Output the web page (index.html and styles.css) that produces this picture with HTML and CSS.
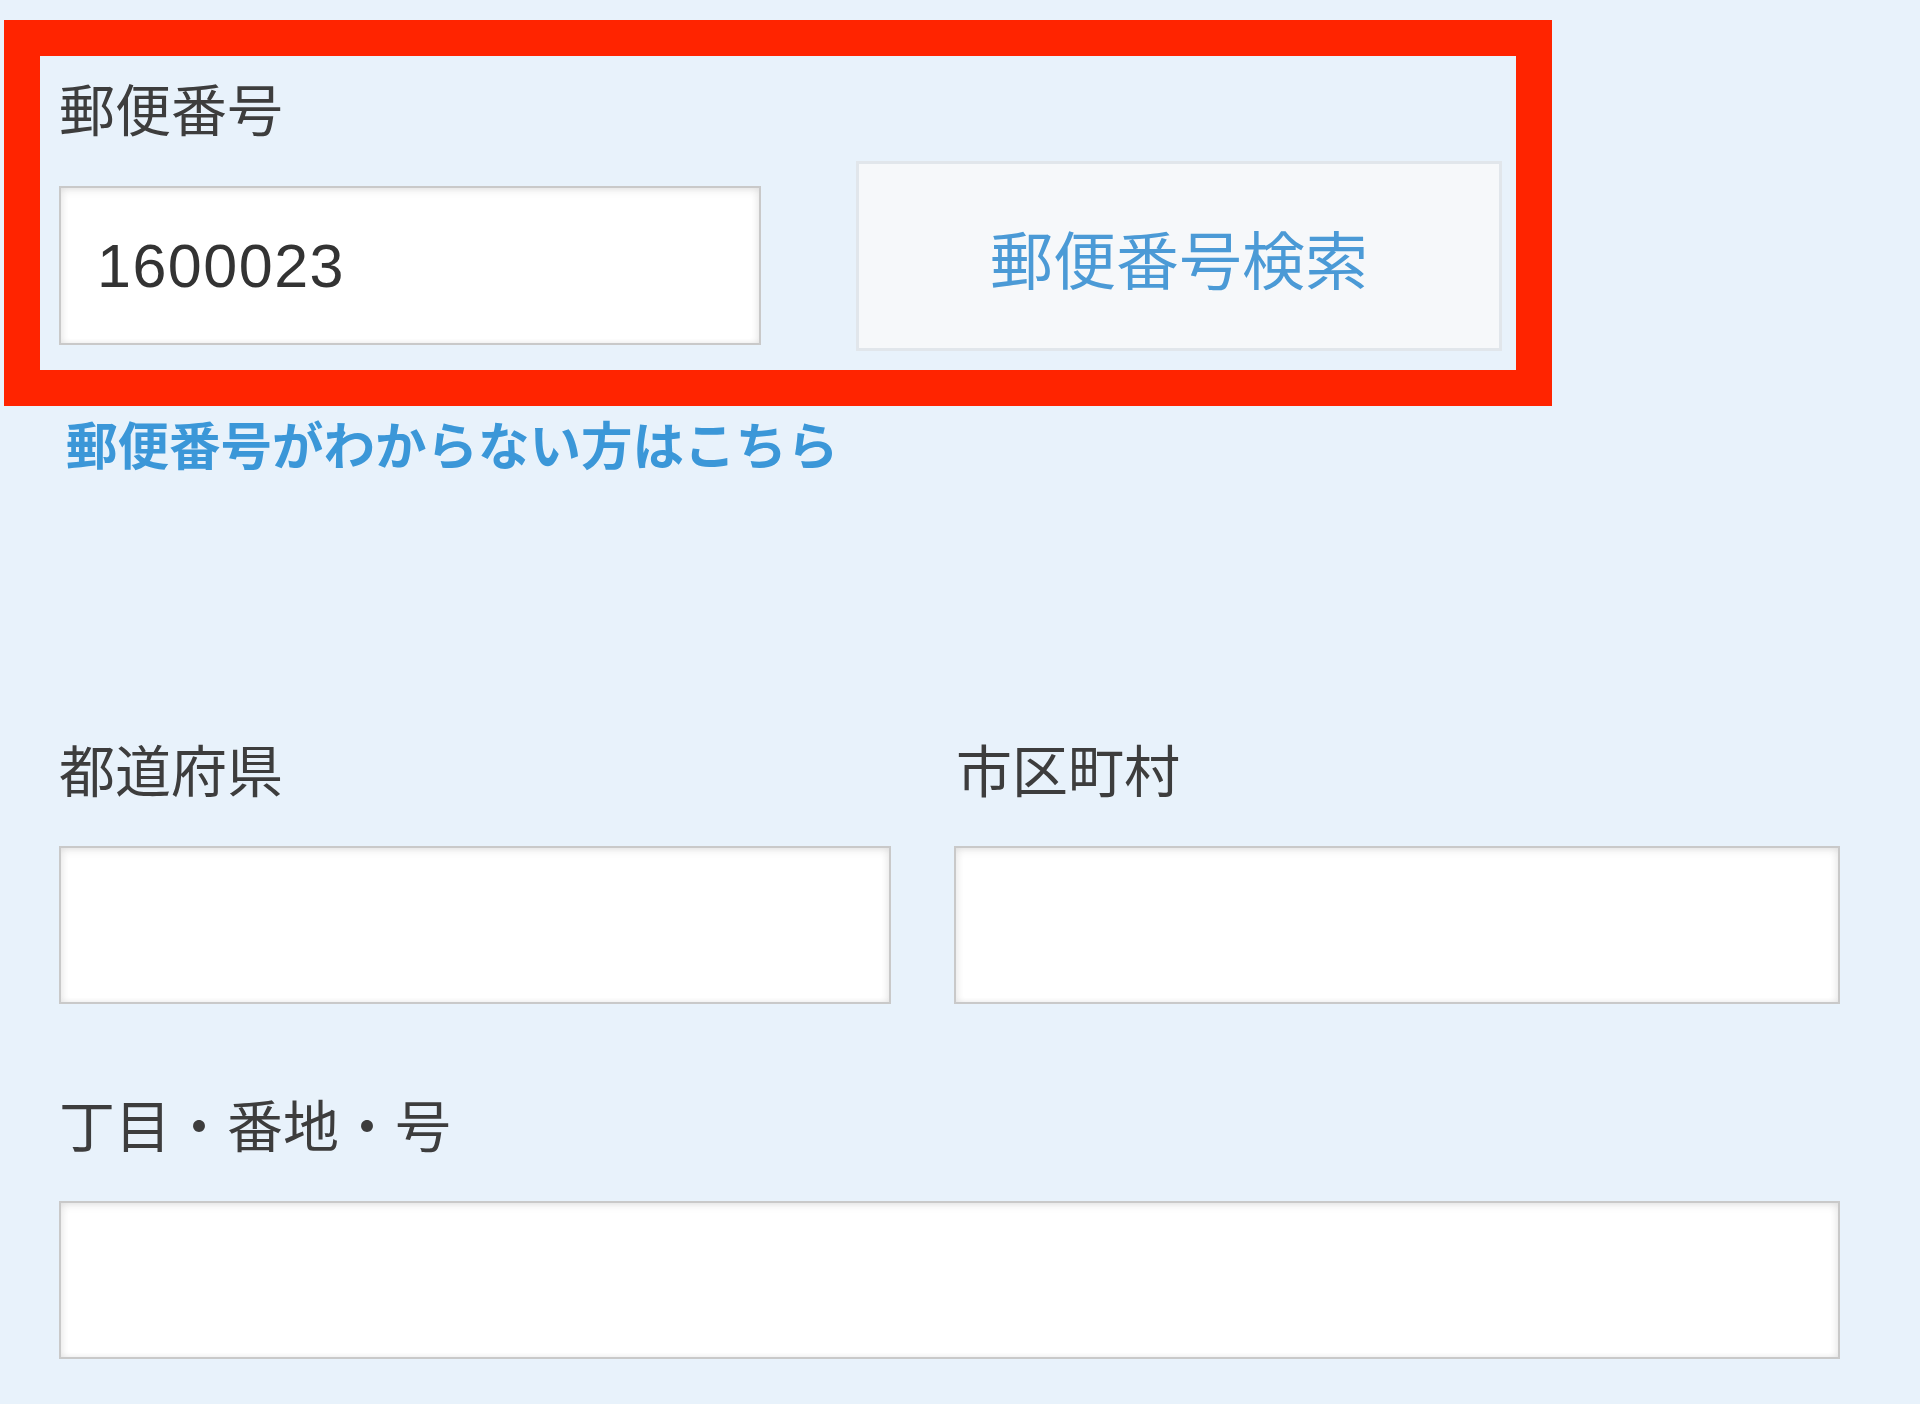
FILE: index.html
```html
<!DOCTYPE html>
<html lang="ja">
<head>
<meta charset="utf-8">
<title>住所入力</title>
<link rel="stylesheet" href="styles.css">
</head>
<body>
<div class="page">
  <div class="zip-box">
    <div class="label">郵便番号</div>
    <div class="zip-row">
      <div class="field zip-field">1600023</div>
      <button class="zip-btn" type="button">郵便番号検索</button>
    </div>
  </div>
  <a class="zip-link" href="#">郵便番号がわからない方はこちら</a>
  <div class="addr-grid">
    <div class="addr-col">
      <div class="label">都道府県</div>
      <div class="field"></div>
    </div>
    <div class="addr-col addr-col-right">
      <div class="label">市区町村</div>
      <div class="field"></div>
    </div>
  </div>
  <div class="addr-full">
    <div class="label">丁目・番地・号</div>
    <div class="field"></div>
  </div>
</div>
</body>
</html>
```
FILE: styles.css
```css
html, body {
  margin: 0;
  padding: 0;
  background: #e8f2fb;
}
body {
  font-family: "Noto Sans CJK JP", "Noto Sans", sans-serif;
  color: #3a3a3a;
  width: 1920px;
  height: 1404px;
  overflow: hidden;
}
.page {
  padding-top: 20px;
}
.label {
  font-size: 56px;
  line-height: 56px;
  height: 56px;
  color: #3d3d3d;
  white-space: nowrap;
}
.zip-box {
  margin-left: 4px;
  border: 36px solid #ff2400;
  padding: 23px 0 19px 19px;
  box-sizing: content-box;
  width: 1457px;
}
.zip-row {
  display: flex;
  align-items: flex-start;
  margin-top: 26px;
  gap: 95px;
}
.field {
  background: #fff;
  border: 2px solid #c9c9c9;
  box-shadow: inset 0 3px 8px rgba(0, 0, 0, 0.07), inset 3px 0 6px rgba(0, 0, 0, 0.04), inset -3px 0 6px rgba(0, 0, 0, 0.04);
  height: 158px;
  box-sizing: border-box;
}
.zip-field {
  width: 702px;
  height: 159px;
  margin-top: 25px;
  display: flex;
  align-items: center;
  padding-left: 36px;
  font-family: "Liberation Sans", "Noto Sans CJK JP", sans-serif;
  font-size: 61px;
  letter-spacing: 1.5px;
  color: #333;
}
.zip-btn {
  width: 646px;
  height: 190px;
  background: #f6f8fa;
  border: 3px solid #e1e6eb;
  font-family: "Noto Sans CJK JP", sans-serif;
  font-size: 63px;
  color: #4b9ad6;
  padding: 0;
  margin: 0;
  cursor: pointer;
}
.zip-link {
  display: block;
  margin: 11px 0 0 66px;
  font-size: 51.5px;
  line-height: 52px;
  height: 52px;
  font-weight: 700;
  color: #3b97d8;
  text-decoration: none;
  white-space: nowrap;
}
.addr-grid {
  display: grid;
  grid-template-columns: 832px 886px;
  column-gap: 63px;
  margin: 271px 0 0 59px;
}
.addr-col .field,
.addr-full .field {
  margin-top: 50px;
}
.addr-col-right .label {
  padding-left: 2px;
}
.addr-full {
  margin: 91px 0 0 59px;
  width: 1781px;
}
```
